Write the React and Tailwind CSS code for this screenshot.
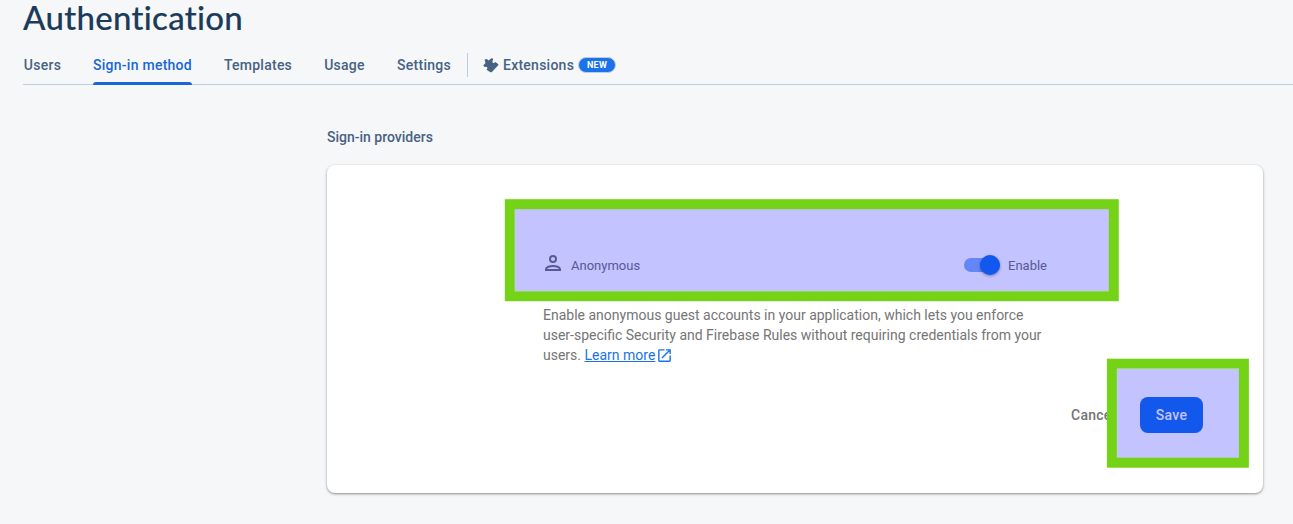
const tabs = [
  { label: 'Users', width: 'w-[37px]' },
  { label: 'Sign-in method', width: 'w-[99px]', active: true },
  { label: 'Templates', width: 'w-[68px]' },
  { label: 'Usage', width: 'w-[41px]' },
  { label: 'Settings', width: 'w-[54px]' },
];

function Tab({ label, width, active }) {
  return (
    <button
      className={`flex h-[45px] shrink-0 flex-col items-center justify-between whitespace-nowrap text-sm leading-5 font-medium tracking-[0.25px] ${width} ${
        active ? 'text-[#1967d2]' : 'text-[#476282]'
      }`}
    >
      <span className="mt-[15px]">{label}</span>
      {active && <span className="h-[3px] w-full rounded-t-[3px] bg-[#1967d2]" />}
    </button>
  );
}

function ExtensionIcon() {
  return (
    <svg viewBox="0 0 16 16" className="mt-px mr-px size-4 shrink-0" fill="currentColor">
      <path d="M1.600 1.700Q3.500.4 4.700 1.800L5.800 2.400 7.400.900Q8.500-.2 9.700.6 10.500 1.500 9.600 2.800 9 4.300 10.300 4.900 11.300 5.100 12.500 4L15.300 6.200Q15.600 7 15 7.600L8.900 13.900Q8 14.500 7.100 14L3.500 11.800Q4.900 10.200 4.100 9.200 3.300 8.300 1.700 8.900 0 8.400 .6 6.900L2.500 4.900Z" />
    </svg>
  );
}

function PersonIcon() {
  return (
    <svg viewBox="0 0 24 24" className="-ml-0.5 size-6" fill="none" stroke="currentColor" strokeWidth="2">
      <path d="M12 5a3 3 0 1 1 0 6 3 3 0 0 1 0-6z" />
      <path d="M5 19v-1c0-2 4-3.100 7-3.100s7 1.100 7 3.100v1z" />
    </svg>
  );
}

function OpenInNewIcon() {
  return (
    <svg viewBox="0 0 24 24" className="ml-px inline-block size-[17px] align-[-4px]" fill="currentColor">
      <path d="M19 19H5V5h7V3H5a2 2 0 0 0-2 2v14a2 2 0 0 0 2 2h14c1.100 0 2-.9 2-2v-7h-2v7zM14 3v2h3.590l-9.830 9.830 1.410 1.410L19 6.410V10h2V3h-7z" />
    </svg>
  );
}

export default function App() {
  return (
    <div className="h-[524px] w-full overflow-hidden bg-[#f6f7f9] font-['Roboto',sans-serif]">
      <header className="pl-[23px]">
        <h1 className="h-10 font-['Lato','Open_Sans',sans-serif] text-[33px] leading-[34px] font-medium tracking-[0.3px] text-[#1c3a5a] [-webkit-text-stroke:0.15px]">
          Authentication
        </h1>
        <nav className="flex h-[45px] border-b border-[#bccde0] pl-px">
          <div className="flex gap-8">
            {tabs.map((tab) => (
              <Tab key={tab.label} {...tab} />
            ))}
          </div>
          <div className="mt-[13px] ml-4 h-6 w-px bg-[#bccde0]" />
          <button className="mt-[15px] ml-[15px] flex h-5 items-center text-sm font-medium tracking-[0.25px] text-[#476282]">
            <ExtensionIcon />
            <span className="ml-[3px] w-[75px] text-left">Extensions</span>
            <span className="flex h-4 w-[38px] items-center justify-center rounded-full border border-[#bccde0] bg-[#1a73e8] text-[9px] font-bold tracking-[0.3px] text-white">
              NEW
            </span>
          </button>
        </nav>
      </header>

      <main className="ml-[327px] w-[936px] pt-[42px]">
        <h2 className="text-sm leading-5 font-medium text-[#476282]">Sign-in providers</h2>
        <section className="relative mt-[18px] h-[328px] rounded-lg bg-white pt-[86px] shadow-[0_1px_2px_rgba(0,0,0,0.3),0_1px_3px_1px_rgba(0,0,0,0.1)]">
          <div className="ml-[216px] flex h-7 w-[504px] items-center justify-between text-[13px] text-[#757575]">
            <div className="flex items-center">
              <span className="-mt-1">
                <PersonIcon />
              </span>
              <span className="ml-1.5 pt-0.5">Anonymous</span>
            </div>
            <div className="flex items-center">
              <span className="flex h-3.5 w-9 items-center justify-end rounded-full bg-[#82b1f4]">
                <span className="size-5 shrink-0 rounded-full bg-[#1a73e8] shadow-[0_1px_3px_rgba(0,0,0,0.4)]" />
              </span>
              <span className="ml-2 pt-0.5">Enable</span>
            </div>
          </div>
          <p className="mt-[26px] ml-[216px] w-[506px] text-sm leading-5 text-[#757575]">
            Enable anonymous guest accounts in your application, which lets you enforce
            <br />
            user-specific Security and Firebase Rules without requiring credentials from your
            <br />
            users.{' '}
            <a className="text-[#1a73e8]">
              <span className="underline">Learn more</span>
              <OpenInNewIcon />
            </a>
          </p>
          <div className="mt-8 mr-[60px] flex justify-end text-sm font-medium tracking-[0.25px]">
            <button className="h-9 w-[69px] text-left text-[#757575]">Cancel</button>
            <button className="h-9 w-[63px] rounded-lg bg-[#1a73e8] text-white">Save</button>
          </div>

          <div className="absolute top-[34px] left-[178px] h-[102px] w-[614px] -translate-x-[0.2px] translate-y-[0.2px] border-10 border-[#74d316] bg-[#0000ff3c] bg-clip-padding" />
          <div className="absolute top-[194px] left-[780px] h-[109px] w-[142px] -translate-x-[0.1px] -translate-y-[0.3px] border-10 border-[#74d316] bg-[#0000ff3c] bg-clip-padding" />
        </section>
      </main>
    </div>
  );
}
